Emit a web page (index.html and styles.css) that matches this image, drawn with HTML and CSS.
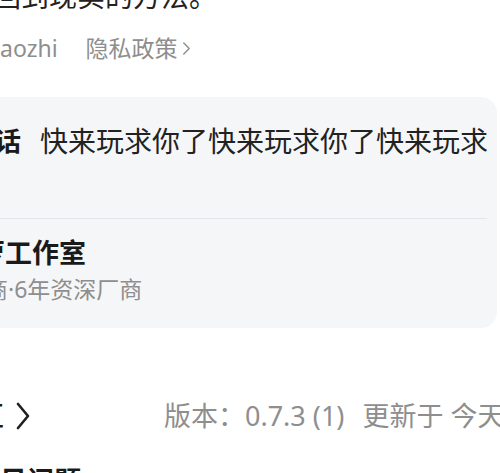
FILE: index.html
```html
<!DOCTYPE html>
<html lang="zh-CN">
<head>
<meta charset="utf-8">
<title>详情</title>
<link rel="stylesheet" href="styles.css">
</head>
<body>
<div class="page">
  <p class="intro">找到回到现实的方法。</p>
  <div class="meta">
    <span class="author">zhaohaozhi</span>
    <span class="privacy">隐私政策<svg class="chev-s" viewBox="0 0 10 16" width="9" height="15"><path d="M2 2l6 6-6 6" fill="none" stroke="#8e8e8e" stroke-width="1.6" stroke-linecap="round" stroke-linejoin="round"/></svg></span>
  </div>
  <section class="card">
    <div class="slogan">
      <span class="label">一句话</span>
      <span class="slogan-text">快来玩求你了快来玩求你了快来玩求</span>
    </div>
    <div class="dev">
      <div class="dev-name">菠萝工作室</div>
      <div class="dev-sub">认证厂商·6年资深厂商</div>
    </div>
  </section>
  <div class="info">
    <span class="info-title">游戏社区</span>
    <svg class="chev" viewBox="0 0 14 28" width="14" height="28"><path d="M2 2l10 12-10 12" fill="none" stroke="#1f1f1f" stroke-width="2.6" stroke-linecap="round" stroke-linejoin="round"/></svg>
    <span class="version">版本：0.7.3 (1)<span class="updated">更新于 今天</span></span>
  </div>
  <h2 class="faq">常见问题</h2>
</div>
</body>
</html>
```

FILE: styles.css
```css
html, body {
  margin: 0;
  padding: 0;
  background: #ffffff;
}
body {
  width: 500px;
  height: 473px;
  overflow: hidden;
  font-family: "Noto Sans", "Noto Sans CJK SC", sans-serif;
}
.page {
  margin-left: -84px;
  width: 581px;
}
.intro {
  margin: -23px 0 0 0;
  padding-left: 27px;
  text-indent: -6px;
  font-size: 28px;
  line-height: 38px;
  color: #222222;
  white-space: nowrap;
}
.meta {
  display: flex;
  align-items: center;
  margin-top: 18px;
  padding-left: 27px;
  font-size: 23px;
  line-height: 30px;
  color: #8e8e8e;
  white-space: nowrap;
}
.meta > *, .info > *, .slogan > * {
  flex-shrink: 0;
}
.author {
  margin-left: -9px;
}
.privacy {
  display: flex;
  align-items: center;
  margin-left: 28px;
}
.chev-s {
  margin-left: 4px;
}
.card {
  margin-top: 34px;
  background: #f5f6f8;
  border-radius: 16px;
  padding: 0 10px 0 27px;
}
.slogan {
  display: flex;
  align-items: center;
  padding: 24px 0 57px 0;
  line-height: 40px;
  white-space: nowrap;
  overflow: hidden;
  border-bottom: 1px solid #e4e5e8;
}
.label {
  font-size: 26px;
  font-weight: 700;
  color: #1a1a1a;
  margin-right: 19px;
}
.slogan-text {
  font-size: 28px;
  color: #222222;
}
.dev {
  padding: 16px 0 24px 0;
}
.dev-name {
  font-size: 27px;
  line-height: 36px;
  font-weight: 700;
  color: #1a1a1a;
  text-indent: 8px;
  white-space: nowrap;
}
.dev-sub {
  margin-top: 3px;
  font-size: 23px;
  line-height: 30px;
  color: #8e8e8e;
  text-indent: -27px;
  white-space: nowrap;
}
.info {
  display: flex;
  align-items: center;
  margin-top: 70px;
  padding-left: 27px;
  line-height: 36px;
  white-space: nowrap;
}
.info-title {
  font-size: 27px;
  font-weight: 500;
  color: #1a1a1a;
  margin-left: -47px;
}
.chev {
  margin-left: 12px;
}
.version {
  margin-left: 134px;
  font-size: 27px;
  color: #8e8e8e;
}
.updated {
  margin-left: 18px;
}
.faq {
  margin: 29px 0 0 0;
  padding-left: 27px;
  text-indent: 30px;
  font-size: 27px;
  line-height: 36px;
  font-weight: 700;
  color: #1a1a1a;
  white-space: nowrap;
}
```
